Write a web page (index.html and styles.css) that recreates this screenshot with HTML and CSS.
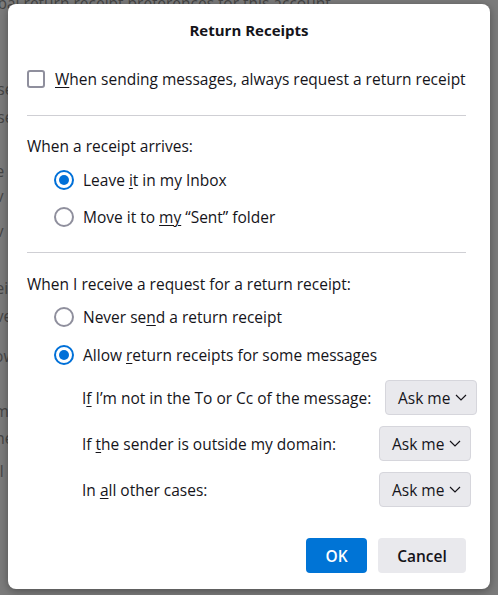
FILE: index.html
```html
<!DOCTYPE html>
<html>
<head>
<meta charset="utf-8">
<link rel="stylesheet" href="styles.css">
</head>
<body>
<div class="backdrop">
  <div class="bg-line bg-top">Global return receipt preferences for this account</div>
  <div class="bg-line" style="top:78px">Use</div>
  <div class="bg-line" style="top:106px">Use</div>
  <div class="bg-line" style="top:160px">Re</div>
  <div class="bg-line" style="top:185px">Av</div>
  <div class="bg-line" style="top:220px">Av</div>
  <div class="bg-line" style="top:277px">Rei</div>
  <div class="bg-line" style="top:305px">Ave</div>
  <div class="bg-line" style="top:345px">Low</div>
  <div class="bg-line" style="top:400px">Tm</div>
  <div class="bg-line" style="top:427px">one</div>
  <div class="bg-line" style="top:460px">All</div>
</div>

<div class="dialog">
  <div class="title">Return Receipts</div>

  <div class="row check-row">
    <span class="checkbox"></span>
    <span><u>W</u>hen sending messages, always request a return receipt</span>
  </div>

  <div class="sep sep1"></div>

  <div class="heading h1">When a receipt arrives:</div>
  <div class="row radio-row r1"><span class="radio on"></span><span>Leave <u>i</u>t in my Inbox</span></div>
  <div class="row radio-row r2"><span class="radio"></span><span>Move it to <u>my</u> “Sent” folder</span></div>

  <div class="sep sep2"></div>

  <div class="heading h2">When I receive a request for a return receipt:</div>
  <div class="row radio-row r3"><span class="radio"></span><span>Never se<u>n</u>d a return receipt</span></div>
  <div class="row radio-row r4"><span class="radio on"></span><span>Allow <u>r</u>eturn receipts for some messages</span></div>

  <div class="opt-row o1">
    <span class="opt-label wide">I<u>f</u> I’m not in the To or Cc of the message:</span>
    <span class="select">Ask me<svg class="chev" width="12" height="7" viewBox="0 0 12 7"><path d="M1 1l5 5 5-5" fill="none" stroke="#15141a" stroke-width="1.2"/></svg></span>
  </div>
  <div class="opt-row o2">
    <span class="opt-label">If <u>t</u>he sender is outside my domain:</span>
    <span class="select">Ask me<svg class="chev" width="12" height="7" viewBox="0 0 12 7"><path d="M1 1l5 5 5-5" fill="none" stroke="#15141a" stroke-width="1.2"/></svg></span>
  </div>
  <div class="opt-row o3">
    <span class="opt-label">In <u>a</u>ll other cases:</span>
    <span class="select">Ask me<svg class="chev" width="12" height="7" viewBox="0 0 12 7"><path d="M1 1l5 5 5-5" fill="none" stroke="#15141a" stroke-width="1.2"/></svg></span>
  </div>

  <div class="buttons">
    <button class="btn ok">OK</button>
    <button class="btn cancel">Cancel</button>
  </div>
</div>
</body>
</html>
```

FILE: styles.css
```css
html, body {
  margin: 0;
  padding: 0;
}
body {
  width: 498px;
  height: 595px;
  overflow: hidden;
  background: #7b7b7b;
  font-family: "Open Sans", "Noto Sans", sans-serif;
  color: #15141a;
  position: relative;
}
.backdrop {
  position: absolute;
  inset: 0;
  color: #454545;
  font-size: 15.5px;
}
.bg-line {
  position: absolute;
  left: -14px;
  white-space: nowrap;
}
.bg-top {
  top: -8px;
  left: -27px;
}
.dialog {
  position: absolute;
  left: 8px;
  top: 4px;
  width: 482px;
  height: 585px;
  box-sizing: border-box;
  background: #fff;
  border-radius: 8px;
  box-shadow: 0 2px 8px rgba(0,0,0,0.35);
  padding: 0 24px 0 19px;
  display: flex;
  flex-direction: column;
  font-size: 15.5px;
}
u {
  text-decoration-thickness: 1px;
  text-underline-offset: 2px;
}
.title {
  height: 52px;
  display: flex;
  align-items: center;
  justify-content: center;
  font-weight: 700;
  font-size: 15px;
  padding-left: 5px;
}
.row {
  display: flex;
  align-items: center;
  white-space: nowrap;
}
.check-row {
  height: 46px;
  gap: 10px;
}
.checkbox {
  width: 18px;
  height: 18px;
  box-sizing: border-box;
  border: 2px solid #8f8f9d;
  border-radius: 3px;
  flex: none;
}
.sep {
  height: 1px;
  background: #cfcfd4;
  flex: none;
}
.sep1 { margin-top: 13px; }
.sep2 { margin-top: 16px; }
.heading {
  height: 32px;
  display: flex;
  align-items: center;
  flex: none;
}
.h1 { margin-top: 14px; }
.h2 { margin-top: 15px; }
.radio-row {
  padding-left: 27px;
  gap: 9px;
  flex: none;
}
.r1 { height: 36px; }
.r2 { height: 38px; }
.r3 { height: 34px; }
.r4 { height: 42px; }
.radio {
  width: 20px;
  height: 20px;
  box-sizing: border-box;
  border: 2px solid #8f8f9d;
  border-radius: 50%;
  flex: none;
  position: relative;
}
.radio.on {
  border-color: #0070d8;
}
.radio.on::after {
  content: "";
  position: absolute;
  left: 3px;
  top: 3px;
  width: 10px;
  height: 10px;
  border-radius: 50%;
  background: #0070d8;
}
.opt-row {
  display: flex;
  align-items: center;
  height: 35px;
  padding-left: 55px;
  white-space: nowrap;
  flex: none;
}
.o1 { margin-top: 4px; }
.o2, .o3 { margin-top: 11px; }
.opt-label {
  width: 297px;
  flex: none;
}
.opt-label.wide {
  width: 303px;
}
.select {
  width: 92px;
  height: 35px;
  flex: none;
  box-sizing: border-box;
  background: #e9e9ed;
  border: 1px solid #d6d6dc;
  border-radius: 4px;
  display: flex;
  align-items: center;
  padding-left: 12px;
  gap: 5px;
}
.chev {
  flex: none;
}
.buttons {
  margin-top: 31px;
  display: flex;
  justify-content: flex-end;
  gap: 11px;
  flex: none;
}
.btn {
  height: 35px;
  border: none;
  border-radius: 4px;
  font-family: inherit;
  font-size: 15.5px;
  font-weight: 600;
  padding: 0;
}
.ok {
  width: 61px;
  background: #0074d6;
  color: #fff;
}
.cancel {
  width: 88px;
  background: #e9e9ed;
  color: #15141a;
}
```
